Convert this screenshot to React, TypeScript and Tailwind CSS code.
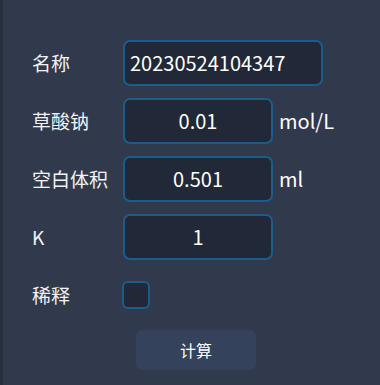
import { useState } from "react";

const font = { fontFamily: '"Noto Sans CJK SC", "Noto Sans", sans-serif' };

function Field({
  label,
  value,
  unit,
  wide,
}: {
  label: string;
  value: string;
  unit?: string;
  wide?: boolean;
}) {
  return (
    <div className="flex h-[46px] items-center">
      <span className="w-[91px] text-[19px] text-[#f1f3f6]">{label}</span>
      <div
        className={
          wide
            ? "flex h-full w-[200px] items-center rounded-[7px] border-2 border-[#1c5c88] bg-[#212938] px-[5px] text-[20px] text-white"
            : "flex h-full w-[150px] items-center justify-center rounded-[7px] border-2 border-[#1c5c88] bg-[#212938] text-[20px] text-white"
        }
      >
        {value}
      </div>
      {unit && <span className="ml-[6px] text-[20px] text-white">{unit}</span>}
    </div>
  );
}

export default function App() {
  const [dilute, setDilute] = useState(false);

  return (
    <div className="flex h-[385px] w-[380px] bg-[#313a4d]" style={font}>
      <div className="w-[3px] shrink-0 bg-[#283040]" />
      <div className="flex flex-1 flex-col gap-[12px] pl-[29px] pt-[40px]">
        <Field label="名称" value="20230524104347" wide />
        <Field label="草酸钠" value="0.01" unit="mol/L" />
        <Field label="空白体积" value="0.501" unit="ml" />
        <Field label="K" value="1" />
        <div className="flex h-[46px] items-center">
          <span className="w-[90px] text-[19px] text-[#f1f3f6]">稀释</span>
          <button
            onClick={() => setDilute(!dilute)}
            className="h-[28px] w-[28px] rounded-[6px] border-2 border-[#1c5c88] bg-[#212938]"
          />
        </div>
        <div className="pl-[104px]">
          <button className="h-[40px] w-[120px] rounded-[6px] bg-[#34435b] text-[16px] text-white">
            计算
          </button>
        </div>
      </div>
    </div>
  );
}
